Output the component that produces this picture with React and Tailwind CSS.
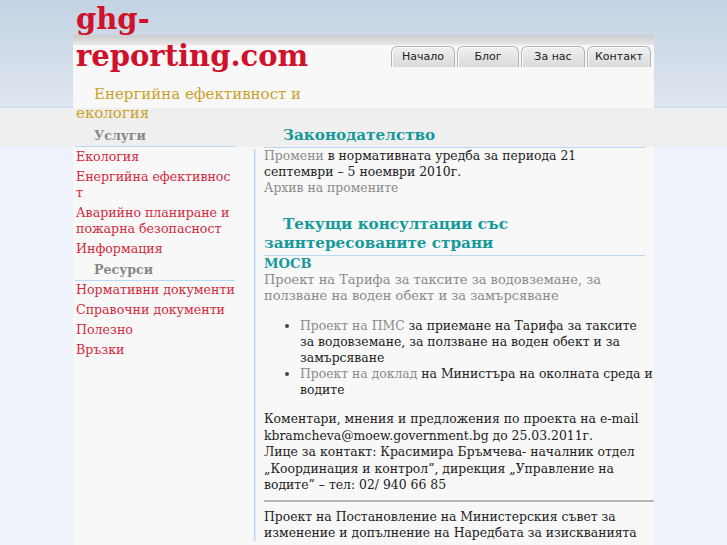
const SERVICES = [
  { label: "Екология" },
  { label: "Енергийна ефективнос", tail: "т" },
  { label: "Аварийно планиране и пожарна безопасност" },
  { label: "Информация" },
];

const RESOURCES = [
  "Нормативни документи",
  "Справочни документи",
  "Полезно",
  "Връзки",
];

const TABS = ["Начало", "Блог", "За нас", "Контакт"];

function SideHeading({ children, className = "" }) {
  return (
    <h3
      className={`ml-[2px] mb-[2px] w-[160px] border-b border-[#b9d8f5] pb-[1px] indent-[19px] text-[12.6px] font-bold leading-[19px] text-[#878787] ${className}`}
    >
      {children}
    </h3>
  );
}

function SideLink({ children }) {
  return (
    <li className="mb-[4px] pl-[3px] text-[12.6px] leading-[16px] text-[#d3293c]">
      <a href="#">{children}</a>
    </li>
  );
}

function Heading({ children, className = "" }) {
  return (
    <h2
      className={`mr-[9px] border-b border-[#b9d8f5] pb-[2px] indent-[19px] text-[15.2px] font-bold leading-[19px] text-[#16999a] ${className}`}
    >
      {children}
    </h2>
  );
}

function Muted({ children }) {
  return (
    <a href="#" className="text-[#8a8a8a]">
      {children}
    </a>
  );
}

export default function App() {
  return (
    <div className="min-h-screen bg-[linear-gradient(to_bottom,#c3d3e3_0px,#dfe6ef_106px,#cadcf0_107px,#cadcf0_108px,#efefef_108px,#efefef_147px,#eef3fb_147px)] font-['DejaVu_Serif',serif]">
      <div className="mx-auto min-h-[545px] w-[581px] bg-[linear-gradient(to_bottom,transparent_35px,#cbcbcb_35px,#e8e8e8_45px,#f8f8f8_45px,#f8f8f8_108px,#efefef_108px,#efefef_147px,#f8f8f8_147px)]">
        {/* header */}
        <div className="flex justify-between">
          <div className="w-[240px] pl-[3px]">
            <h1 className="pt-[1px] text-[29px] font-bold leading-[37px] text-[#d0112b]">
              ghg-reporting.com
            </h1>
            <p className="mt-[10px] indent-[18px] text-[15px] leading-[19px] text-[#c9a22b]">
              Енергийна ефективност и екология
            </p>
          </div>
          <div className="mr-[3px] mt-[46px] flex gap-[2px] self-start">
            {TABS.map((t, i) => (
              <a
                key={t}
                href="#"
                className={`flex h-[21px] items-center justify-center rounded-t-[6px] border border-b-0 border-[#b4b4b4] bg-gradient-to-b from-[#f0f0f0] to-[#dadada] pt-[1px] font-['DejaVu_Sans',sans-serif] text-[11px] text-[#222] shadow-[inset_1px_1px_0_#fafafa] ${
                  i === 1 ? "w-[62px]" : "w-[64px]"
                }`}
              >
                {t}
              </a>
            ))}
          </div>
        </div>

        {/* body */}
        <div className="flex pt-[3px]">
          <aside className="w-[181px] shrink-0">
            <SideHeading>Услуги</SideHeading>
            <ul>
              {SERVICES.map((s) => (
                <SideLink key={s.label}>
                  {s.label}
                  {s.tail && (
                    <>
                      <br />
                      {s.tail}
                    </>
                  )}
                </SideLink>
              ))}
            </ul>
            <SideHeading className="-mt-[1px]">Ресурси</SideHeading>
            <ul className="-mt-[1px]">
              {RESOURCES.map((r) => (
                <SideLink key={r}>{r}</SideLink>
              ))}
            </ul>
          </aside>

          <main className="flex-1 bg-[linear-gradient(to_right,#bcd7f2_1px,#dce9f8_1px)] bg-[length:2px_100%] bg-[position:0_23px] bg-no-repeat pl-[10px] text-[12.4px] leading-[16px] text-[#222]">
            <Heading>Законодателство</Heading>
            <p className="mr-[9px]">
              <Muted>Промени</Muted> в нормативната уредба за периода 21
              септември – 5 ноември 2010г.
              <br />
              <Muted>Архив на промените</Muted>
            </p>

            <Heading className="mt-[19px]">
              Текущи консултации със заинтересованите страни
            </Heading>
            <h3 className="text-[13.2px] font-bold leading-[16px] text-[#16999a]">
              МОСВ
            </h3>
            <p className="mr-[9px] text-[13px]">
              <Muted>
                Проект на Тарифа за таксите за водовземане, за ползване на
                воден обект и за замърсяване
              </Muted>
            </p>

            <ul className="mt-[14px] list-disc pl-[36px] marker:text-[#444]">
              <li>
                <Muted>Проект на ПМС</Muted> за приемане на Тарифа за таксите
                за водовземане, за ползване на воден обект и за замърсяване
              </li>
              <li>
                <Muted>Проект на доклад</Muted> на Министъра на околната среда
                и водите
              </li>
            </ul>

            <p className="mr-[9px] mt-[13px] leading-[16.5px]">
              Коментари, мнения и предложения по проекта на e-mail
              kbramcheva@moew.government.bg до 25.03.2011г.
              <br />
              Лице за контакт: Красимира Бръмчева- началник отдел „Координация
              и контрол”, дирекция „Управление на водите” – тел: 02/ 940 66 85
            </p>

            <hr className="mb-[7px] mt-[6px] border-t-2 border-[#b4b4b4]" />

            <p className="mr-[9px]">
              Проект на Постановление на Министерския съвет за изменение и
              допълнение на Наредбата за изискванията
            </p>
          </main>
        </div>
      </div>
    </div>
  );
}
